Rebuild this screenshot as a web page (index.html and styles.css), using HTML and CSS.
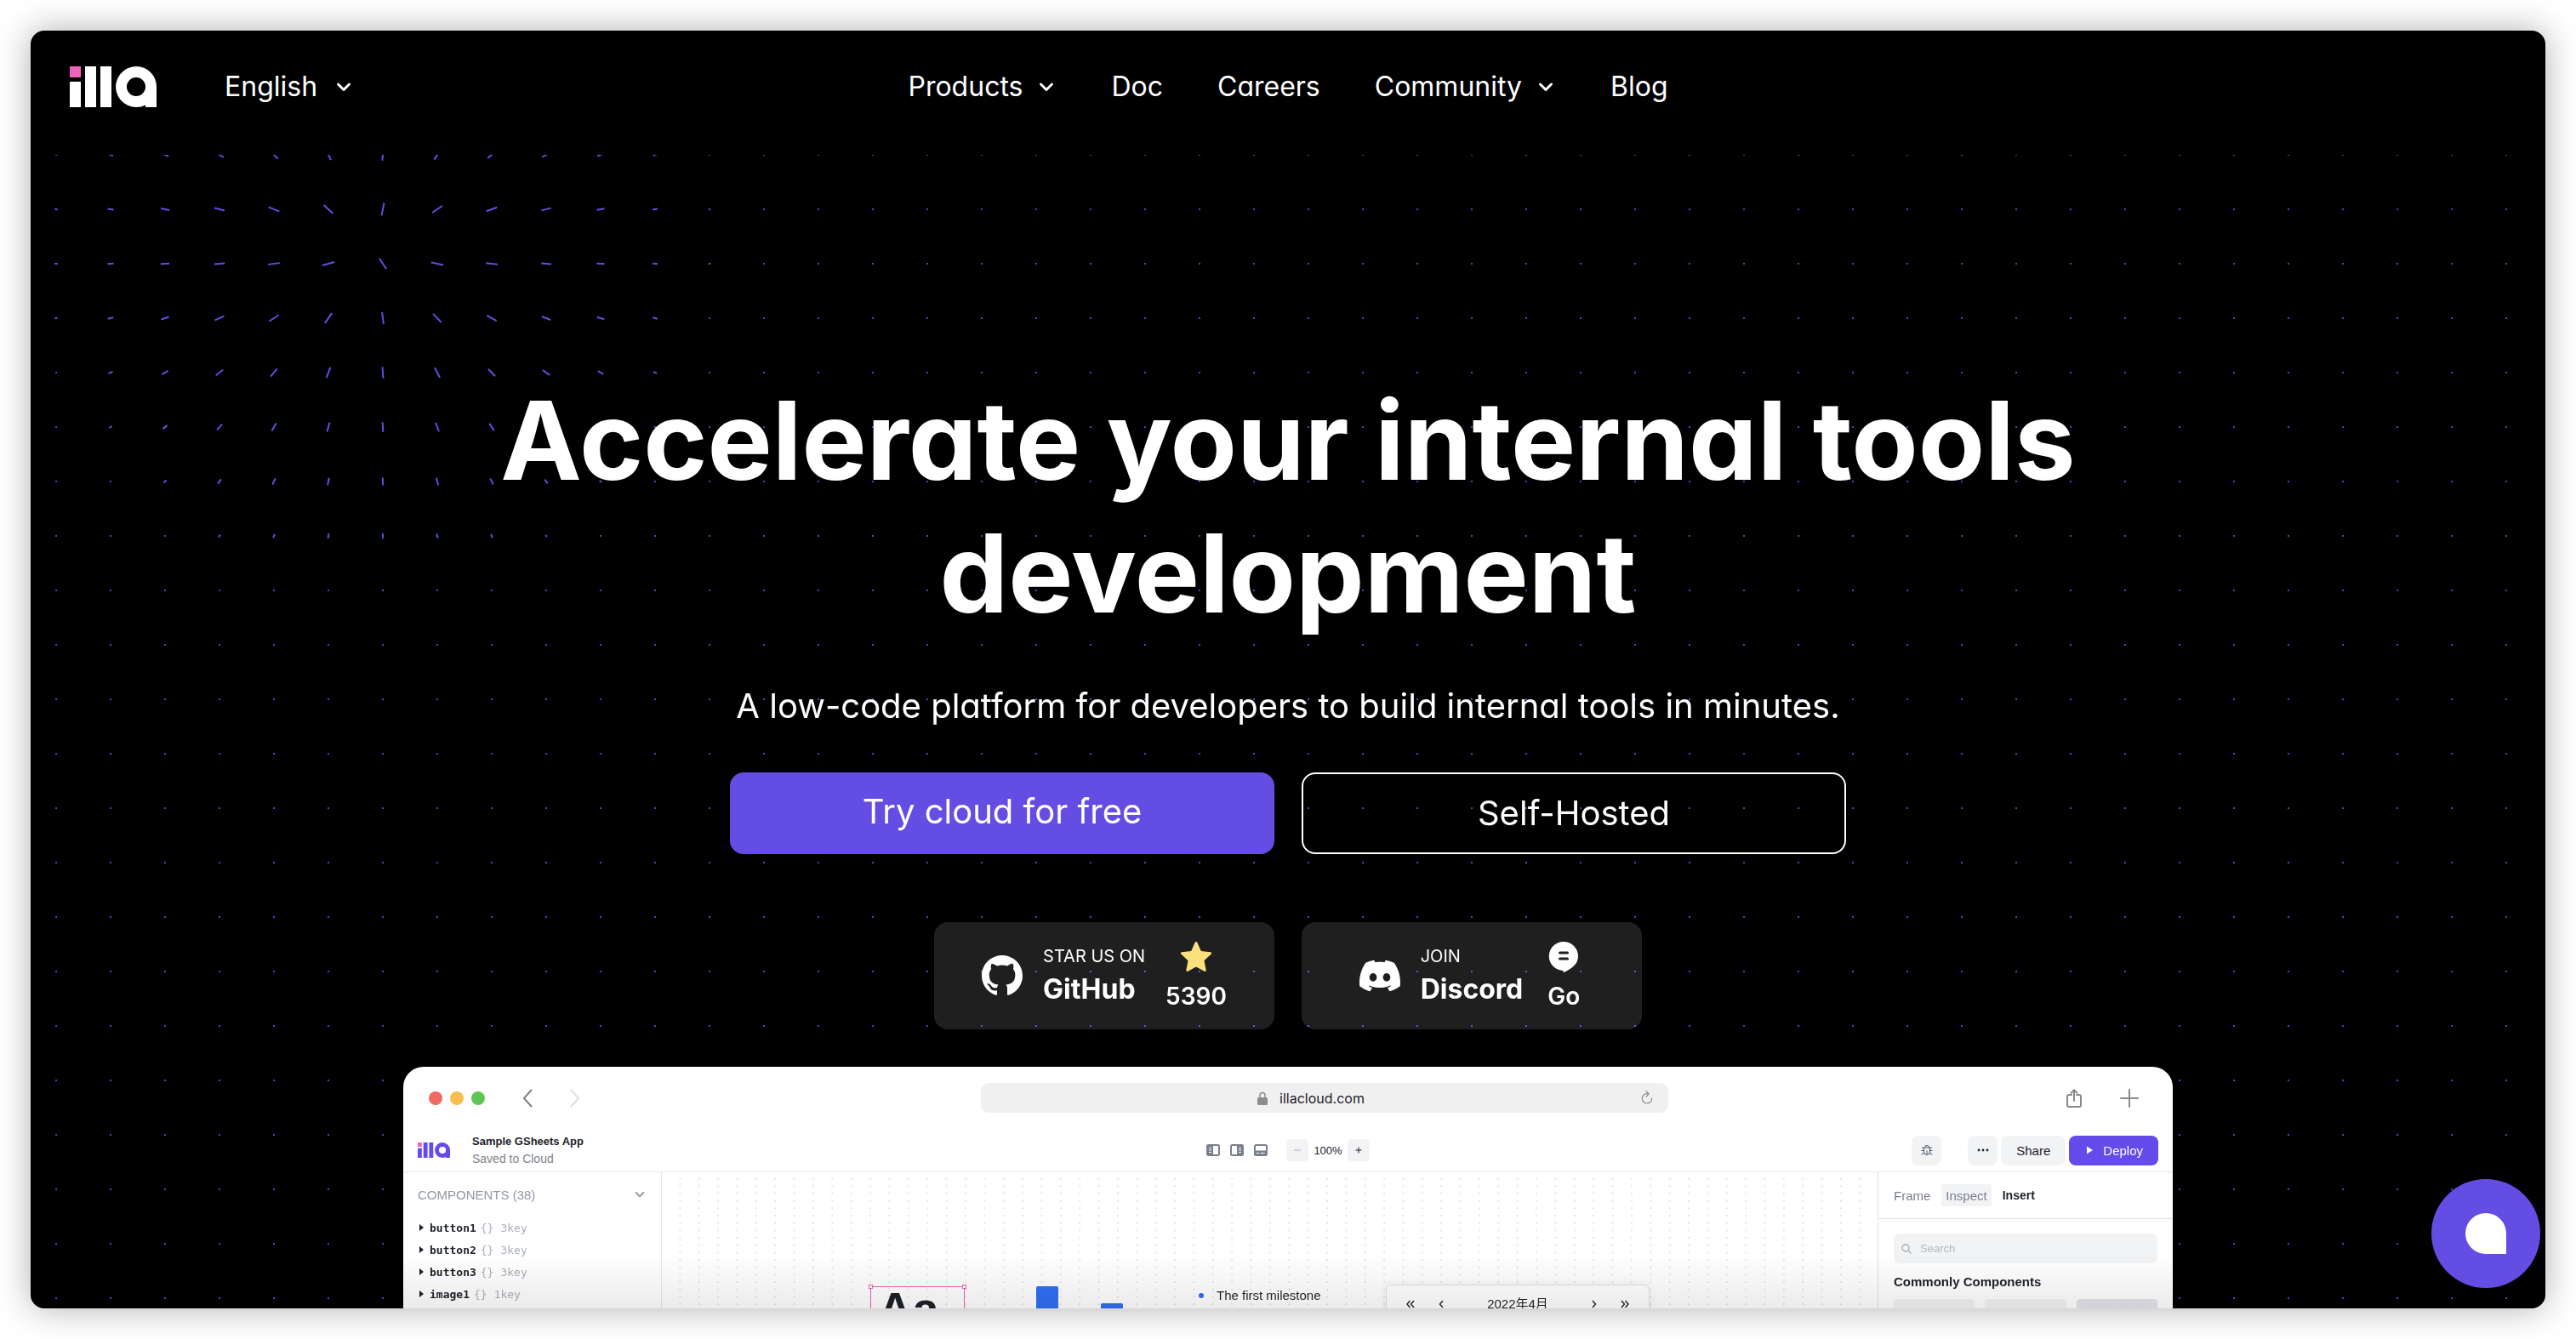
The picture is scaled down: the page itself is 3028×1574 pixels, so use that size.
FILE: index.html
```html
<!DOCTYPE html>
<html lang="en">
<head>
<meta charset="utf-8">
<title>ILLA Cloud</title>
<link rel="stylesheet" href="styles.css">
</head>
<body>
<svg class="sprite" aria-hidden="true">
  <symbol id="illa" viewBox="0 0 102 48">
    <path class="logo-dot" d="M0 0h13v13H0z"/>
    <path d="M0 18h13v30H0zM18 0h13v48H18zM36 0h13v48H36z"/>
    <path fill-rule="evenodd" d="M78 0a24 24 0 0 1 24 24v24H89v-2.600A24 24 0 1 1 78 0zm0 13a11 11 0 1 0 0 22 11 11 0 0 0 0-22z"/>
  </symbol>
  <symbol id="chevron" viewBox="0 0 24 24">
    <path d="M5.500 9l6.500 6.500L18.500 9" fill="none" stroke="currentColor" stroke-width="3" stroke-linecap="round" stroke-linejoin="round"/>
  </symbol>
</svg>

<div class="window">
  <header class="header">
    <div class="header-left">
      <a class="logo" href="#" aria-label="illa home"><svg><use href="#illa"/></svg></a>
      <label class="language">
        <select aria-label="Language"><option>English</option></select>
        <svg class="chevron"><use href="#chevron"/></svg>
      </label>
    </div>
    <nav class="nav">
      <button class="nav-item" type="button">Products<svg class="chevron"><use href="#chevron"/></svg></button>
      <a class="nav-item" href="#">Doc</a>
      <a class="nav-item" href="#">Careers</a>
      <button class="nav-item" type="button">Community<svg class="chevron"><use href="#chevron"/></svg></button>
      <a class="nav-item" href="#">Blog</a>
    </nav>
  </header>

  <main class="hero">
    <canvas class="field" id="field"></canvas>
    <h1 class="title">Accelerate your internal tools development</h1>
    <p class="subtitle">A low-code platform for developers to build internal tools in minutes.</p>
    <div class="actions">
      <a class="cta cta-primary" href="#">Try cloud for free</a>
      <a class="cta cta-outline" href="#">Self-Hosted</a>
    </div>
    <div class="socials">
      <a class="social" href="#">
        <svg class="social-icon" viewBox="0 0 16 16" fill="currentColor"><path d="M8 0C3.580 0 0 3.580 0 8c0 3.540 2.290 6.530 5.470 7.590.4.070.55-.17.55-.38 0-.19-.01-.82-.01-1.490-2.010.37-2.530-.49-2.690-.94-.09-.23-.48-.94-.82-1.130-.28-.15-.68-.52-.01-.53.63-.01 1.080.58 1.230.82.72 1.210 1.870.87 2.330.66.070-.52.28-.87.51-1.070-1.780-.2-3.640-.89-3.640-3.950 0-.87.31-1.590.82-2.150-.08-.2-.36-1.020.080-2.120 0 0 .67-.21 2.200.82.64-.18 1.320-.27 2-.27.68 0 1.360.090 2 .27 1.530-1.040 2.200-.82 2.200-.82.44 1.100.16 1.920.080 2.120.51.56.82 1.270.82 2.150 0 3.070-1.870 3.750-3.650 3.950.29.25.54.73.54 1.480 0 1.070-.01 1.930-.01 2.200 0 .21.15.46.55.38A8.012 8.012 0 0 0 16 8c0-4.420-3.580-8-8-8z"/></svg>
        <span class="social-text"><small>STAR US ON</small><strong>GitHub</strong></span>
        <span class="social-side">
          <svg class="social-icon" viewBox="0 0 48 48"><path d="M22.700 1.800c.5-1.100 2.100-1.100 2.600 0l4.500 10.100 11.100 1.300c1.200.1 1.700 1.600.8 2.400l-8.200 7.600 2.200 11c.2 1.200-1 2.100-2.100 1.500L24 30.400l-9.600 5.300c-1.100.6-2.300-.3-2.100-1.500l2.200-11-8.200-7.600c-.9-.8-.4-2.300.8-2.400l11.100-1.300z" fill="#fae17d"/></svg>
          <b>5390</b>
        </span>
      </a>
      <a class="social" href="#">
        <svg class="social-icon" viewBox="0 0 24 24" fill="currentColor"><path d="M20.317 4.3698a19.7913 19.7913 0 00-4.8851-1.5152.0741.0741 0 00-.0785.0371c-.211.3753-.4447.8648-.6083 1.2495-1.8447-.2762-3.68-.2762-5.4868 0-.1636-.3933-.4058-.8742-.6177-1.2495a.077.077 0 00-.0785-.037 19.7363 19.7363 0 00-4.8852 1.515.0699.0699 0 00-.0321.0277C.5334 9.0458-.319 13.5799.0992 18.0578a.0824.0824 0 00.0312.0561c2.0528 1.5076 4.0413 2.4228 5.9929 3.0294a.0777.0777 0 00.0842-.0276c.4616-.6304.8731-1.2952 1.226-1.9942a.076.076 0 00-.0416-.1057c-.6528-.2476-1.2743-.5495-1.8722-.8923a.077.077 0 01-.0076-.1277c.1258-.0943.2517-.1923.3718-.2914a.0743.0743 0 01.0776-.0105c3.9278 1.7933 8.18 1.7933 12.0614 0a.0739.0739 0 01.0785.0095c.1202.099.246.1981.3728.2924a.077.077 0 01-.0066.1276 12.2986 12.2986 0 01-1.873.8914.0766.0766 0 00-.0407.1067c.3604.698.7719 1.3628 1.225 1.9932a.076.076 0 00.0842.0286c1.961-.6067 3.9495-1.5219 6.0023-3.0294a.077.077 0 00.0313-.0552c.5004-5.177-.8382-9.6739-3.5485-13.6604a.061.061 0 00-.0312-.0286zM8.02 15.3312c-1.1825 0-2.1569-1.0857-2.1569-2.419 0-1.3332.9555-2.4189 2.157-2.4189 1.2108 0 2.1757 1.0952 2.1568 2.419 0 1.3332-.9555 2.4189-2.1569 2.4189zm7.9748 0c-1.1825 0-2.1569-1.0857-2.1569-2.419 0-1.3332.9554-2.4189 2.1569-2.4189 1.2108 0 2.1757 1.0952 2.1568 2.419 0 1.3332-.946 2.4189-2.1568 2.4189Z"/></svg>
        <span class="social-text"><small>JOIN</small><strong>Discord</strong></span>
        <span class="social-side">
          <svg class="social-icon" viewBox="0 0 48 48"><path fill-rule="evenodd" fill="#fff" d="M24 1a17 17 0 0 1 17 17c0 6.500-3.800 10.800-7 13.200-2.800 2.100-5.900 3.800-9 5.500-.9.500-1.500-.1-1.500-1V35A17 17 0 0 1 24 1zm-4.500 11.500a1.500 1.500 0 0 0 0 3h9a1.500 1.500 0 0 0 0-3zm0 7a1.500 1.500 0 0 0 0 3h9a1.500 1.500 0 0 0 0-3z"/></svg>
          <b>Go</b>
        </span>
      </a>
    </div>

    <section class="app" aria-label="Product preview">
      <div class="browser-bar">
        <div class="browser-left">
          <span class="lights"><i class="light red"></i><i class="light yellow"></i><i class="light green"></i></span>
          <svg class="arrow" viewBox="0 0 12 22"><path d="M10.500 1.500L2 11l8.500 9.500"/></svg>
          <svg class="arrow arrow-off" viewBox="0 0 12 22"><path d="M1.500 1.500L10 11l-8.500 9.500"/></svg>
        </div>
        <div class="address">
          <svg class="lock" viewBox="0 0 12 16"><path d="M3 8V4.500a3 3 0 0 1 6 0V8" fill="none" stroke="#8c8c8c" stroke-width="1.500"/><rect y="7" width="12" height="9" rx="1.500" fill="#8c8c8c"/></svg>
          <span>illacloud.com</span>
          <svg class="reload" viewBox="0 0 14 16"><path d="M8.500 3.800A5.700 5.700 0 1 0 12.700 9M6 .8l3.200 3L6.200 7" fill="none" stroke="#8c8c8c" stroke-width="1.200" stroke-linecap="round"/></svg>
        </div>
        <div class="browser-right">
          <svg class="share-icon" viewBox="0 0 18 22"><path d="M6 7H3a2 2 0 0 0-2 2v10a2 2 0 0 0 2 2h12a2 2 0 0 0 2-2V9a2 2 0 0 0-2-2h-3M9 14V1.500M5.500 4.800L9 1.300l3.500 3.500"/></svg>
          <svg class="plus-icon" viewBox="0 0 22 22"><path d="M11 1v20M1 11h20"/></svg>
        </div>
      </div>

      <div class="toolbar">
        <div class="toolbar-left">
          <svg class="app-logo"><use href="#illa"/></svg>
          <div class="doc"><b>Sample GSheets App</b><span>Saved to Cloud</span></div>
        </div>
        <div class="toolbar-mid">
          <svg class="pane" viewBox="0 0 16 14"><rect x="1" y="1" width="14" height="12" rx="1.500"/><path class="solid" d="M1 1h7v12H1z"/><path class="cut" d="M3 4.500h3M3 7h3M3 9.500h3"/></svg>
          <svg class="pane" viewBox="0 0 16 14"><rect x="1" y="1" width="14" height="12" rx="1.500"/><path class="solid" d="M8 1h7v12H8z"/><path class="cut" d="M10 4.500h3M10 7h3M10 9.500h3"/></svg>
          <svg class="pane" viewBox="0 0 16 14"><rect x="1" y="1" width="14" height="12" rx="1.500"/><path class="solid" d="M1 7.500h14V13H1z"/><path class="cut" d="M3 10.500h3M7.500 10.500h5"/></svg>
          <div class="zoom">
            <button class="zoom-btn zoom-off" type="button" aria-label="Zoom out"><svg viewBox="0 0 10 10"><path d="M1 5h8"/></svg></button>
            <span>100%</span>
            <button class="zoom-btn" type="button" aria-label="Zoom in"><svg viewBox="0 0 10 10"><path d="M1.500 5h7M5 1.500v7"/></svg></button>
          </div>
        </div>
        <div class="toolbar-right">
          <button class="tool square debug" type="button" aria-label="Debug"><svg viewBox="0 0 14 14"><path d="M3.500 4h7v5a3.500 3.500 0 0 1-7 0zM4.500 4a2.500 2.500 0 0 1 5 0M7 7.500v5M.5 7.500h3M10.500 7.500h3M1 3.500l2.500 1.700M13 3.500l-2.500 1.700M1.200 12.500v-1l2.500-1M12.800 12.500v-1l-2.500-1"/></svg></button>
          <button class="tool square" type="button" aria-label="More"><svg viewBox="0 0 14 14"><g fill="currentColor" stroke="none"><circle cx="2" cy="7" r="1.400"/><circle cx="7" cy="7" r="1.400"/><circle cx="12" cy="7" r="1.400"/></g></svg></button>
          <button class="tool" type="button">Share</button>
          <button class="tool deploy" type="button"><svg class="play" viewBox="0 0 7 10"><path d="M0 .5v9L7 5z"/></svg>Deploy</button>
        </div>
      </div>

      <div class="workspace">
        <aside class="sidebar">
          <div class="sidebar-head">COMPONENTS (38)<svg class="mini-chevron"><use href="#chevron"/></svg></div>
          <ul class="tree">
            <li><svg class="caret" viewBox="0 0 5 8"><path d="M0 0v8l5-4z"/></svg><b>button1</b><i>{}</i><span>3key</span></li>
            <li><svg class="caret" viewBox="0 0 5 8"><path d="M0 0v8l5-4z"/></svg><b>button2</b><i>{}</i><span>3key</span></li>
            <li><svg class="caret" viewBox="0 0 5 8"><path d="M0 0v8l5-4z"/></svg><b>button3</b><i>{}</i><span>3key</span></li>
            <li><svg class="caret" viewBox="0 0 5 8"><path d="M0 0v8l5-4z"/></svg><b>image1</b><i>{}</i><span>1key</span></li>
          </ul>
        </aside>

        <div class="stage">
          <svg class="stage-dots"><defs><pattern id="dots" width="22.370" height="8.680" patternUnits="userSpaceOnUse"><circle cx="21.400" cy="7.600" r="1"/></pattern></defs><rect width="100%" height="100%" fill="url(#dots)"/></svg>
          <div class="selection"><i class="handle"></i><i class="handle handle-right"></i><span>Aa</span></div>
          <i class="bar bar-tall"></i>
          <i class="bar bar-short"></i>
          <div class="milestone">The first milestone</div>
          <div class="calendar">
            <svg class="double" viewBox="0 0 10 10"><path d="M4.500 1L1 5l3.500 4M9 1L5.500 5 9 9"/></svg>
            <svg class="single" viewBox="0 0 6 10"><path d="M5 1L1.500 5 5 9"/></svg>
            <span>2022年4月</span>
            <svg class="single" viewBox="0 0 6 10"><path d="M1 1l3.500 4L1 9"/></svg>
            <svg class="double" viewBox="0 0 10 10"><path d="M1 1l3.500 4L1 9M5.500 1L9 5 5.500 9"/></svg>
          </div>
        </div>

        <aside class="panel">
          <div class="tabs">
            <button class="tab" type="button">Frame</button>
            <button class="tab tab-hover" type="button">Inspect</button>
            <button class="tab tab-active" type="button">Insert</button>
          </div>
          <div class="panel-body">
            <label class="search">
              <svg viewBox="0 0 12 12"><circle cx="5" cy="5" r="4"/><path d="M8 8l3.500 3.500"/></svg>
              <input type="search" placeholder="Search" aria-label="Search components">
            </label>
            <h2 class="panel-title">Commonly Components</h2>
            <div class="tiles"><i class="tile"></i><i class="tile"></i><i class="tile tile-dark"></i></div>
          </div>
        </aside>
      </div>
    </section>
  </main>

  <button class="chat" type="button" aria-label="Open chat"><span class="chat-drop"></span></button>
</div>
<script src="field.js"></script>
</body>
</html>
```
FILE: styles.css
```css
* {
  box-sizing: border-box;
}

body {
  margin: 0;
  padding: 36px;
  background: #fff;
  color: #fff;
  font-family: Inter, "Liberation Sans", sans-serif;
  font-feature-settings: "cv11";
}

button,
select,
input {
  margin: 0;
  padding: 0;
  border: 0;
  background: none;
  color: inherit;
  font: inherit;
  font-feature-settings: inherit;
}

a {
  color: inherit;
  text-decoration: none;
}

svg {
  display: block;
  flex: none;
}

.sprite {
  position: absolute;
  width: 0;
  height: 0;
}

.window {
  position: relative;
  display: flex;
  flex-direction: column;
  height: calc(100vh - 72px);
  overflow: hidden;
  border-radius: 16px;
  background: #000;
  box-shadow: 0 0 40px rgba(0, 0, 0, 0.32);
}

/* Header */

.header {
  display: grid;
  grid-template-columns: 1fr auto 1fr;
  align-items: center;
  flex: none;
  padding: 42px 46px 56px;
  font-size: 32px;
  line-height: 48px;
}

.header-left {
  display: flex;
  align-items: center;
  gap: 80px;
}

.logo svg {
  width: 102px;
  height: 48px;
  fill: #fff;
}

.logo-dot {
  fill: #ee63bb;
}

.language {
  display: flex;
  align-items: center;
  gap: 18px;
}

.language select {
  appearance: none;
}

.chevron {
  width: 24px;
  height: 24px;
}

.nav {
  display: flex;
  gap: 64px;
}

.nav-item {
  display: flex;
  align-items: center;
  gap: 16px;
}

/* Hero */

.hero {
  position: relative;
  display: flex;
  flex: 1;
  flex-direction: column;
  align-items: center;
  min-height: 0;
  padding-top: 258px;
  overflow: hidden;
}

.field {
  position: absolute;
  inset: 0;
  width: 100%;
  height: 100%;
}

.title,
.subtitle,
.actions,
.socials,
.app {
  position: relative;
  flex: none;
}

.title {
  max-width: 2080px;
  margin: 0;
  font-size: 128px;
  font-weight: 700;
  line-height: 156px;
  text-align: center;
}

.subtitle {
  margin: 54px 0;
  font-size: 40px;
  line-height: 48px;
}

.actions,
.socials {
  display: flex;
  gap: 32px;
}

.cta {
  display: flex;
  align-items: center;
  justify-content: center;
  width: 640px;
  height: 96px;
  padding-bottom: 2px;
  border-radius: 16px;
  font-size: 40px;
}

.cta-primary {
  padding-bottom: 6px;
  background: #634de3;
}

.cta-outline {
  border: 2px solid #fff;
}

.socials {
  margin: 80px 0 44px;
}

.social {
  display: flex;
  align-items: center;
  justify-content: center;
  gap: 24px;
  width: 400px;
  height: 126px;
  border-radius: 16px;
  background: rgba(255, 255, 255, 0.12);
}

.social-icon {
  width: 48px;
  height: 48px;
}

.social-text {
  display: flex;
  flex-direction: column;
  gap: 8px;
}

.social-text small {
  font-size: 20px;
  line-height: 24px;
}

.social-text strong {
  font-size: 32px;
  font-weight: 700;
  line-height: 38px;
}

.social-side {
  display: flex;
  flex-direction: column;
  align-items: center;
}

.social-side b {
  font-size: 28px;
  font-weight: 600;
  line-height: 34px;
}

/* Product preview */

.app {
  display: flex;
  flex: 1;
  flex-direction: column;
  width: 100%;
  max-width: 2080px;
  min-height: 0;
  overflow: hidden;
  border-radius: 24px 24px 0 0;
  background: #fff;
  color: #1d2129;
  font-family: "Liberation Sans", Arial, "Noto Sans CJK SC", sans-serif;
  font-feature-settings: normal;
}

.app::after {
  content: "";
  position: absolute;
  right: 0;
  bottom: 0;
  left: 0;
  height: 64px;
  background: linear-gradient(rgba(0, 0, 0, 0), rgba(0, 0, 0, 0.08));
}

.browser-bar {
  display: grid;
  grid-template-columns: 679fr 808fr 593fr;
  align-items: center;
  flex: none;
  height: 73px;
}

.browser-left {
  display: flex;
  align-items: center;
  gap: 44px;
  padding-left: 30px;
}

.lights {
  display: flex;
  gap: 9px;
}

.light {
  width: 16px;
  height: 16px;
  border-radius: 50%;
}

.red {
  background: #ed6b60;
}

.yellow {
  background: #f5be4f;
}

.green {
  background: #61c555;
}

.arrow {
  width: 12px;
  height: 22px;
  fill: none;
  stroke: #7f7f7f;
  stroke-width: 2;
  stroke-linecap: round;
}

.arrow-off {
  stroke: #dfdfdf;
}

.address {
  position: relative;
  display: flex;
  gap: 14px;
  align-items: center;
  justify-content: center;
  height: 35px;
  padding-right: 32px;
  border-radius: 9px;
  background: #f0f0f0;
  font-family: Inter, "Liberation Sans", sans-serif;
  font-size: 16px;
}

.lock {
  width: 12px;
  height: 16px;
}

.reload {
  position: absolute;
  top: 9px;
  right: 18px;
  width: 14px;
  height: 16px;
}

.browser-right {
  display: flex;
  align-items: center;
  justify-content: flex-end;
  gap: 45px;
  padding-right: 40px;
  fill: none;
  stroke: #8a8a8a;
  stroke-width: 2;
  stroke-linecap: round;
}

.share-icon {
  width: 18px;
  height: 22px;
}

.plus-icon {
  width: 22px;
  height: 22px;
}

.toolbar {
  display: grid;
  grid-template-columns: 1fr auto 1fr;
  align-items: center;
  flex: none;
  height: 51px;
  padding: 0 17px;
  border-bottom: 1px solid #e5e6eb;
}

.toolbar-left {
  display: flex;
  align-items: center;
  gap: 26px;
}

.app-logo {
  width: 38px;
  height: 18px;
  fill: #654aec;
}

.doc {
  display: flex;
  flex-direction: column;
  font-size: 14px;
  line-height: 20px;
}

.doc b {
  font-size: 13px;
}

.doc span {
  color: #7d838c;
}

.toolbar-mid {
  display: flex;
  align-items: center;
  gap: 12px;
  font-size: 13px;
}

.pane {
  width: 16px;
  height: 14px;
  fill: none;
  stroke: #7a808b;
  stroke-width: 2;
}

.pane .solid {
  fill: #7a808b;
  stroke: none;
}

.pane .cut {
  stroke: #fff;
  stroke-width: 1;
}

.zoom {
  display: flex;
  align-items: center;
  gap: 6px;
  padding-left: 10px;
}

.zoom-btn {
  display: grid;
  place-items: center;
  width: 26px;
  height: 26px;
  border-radius: 4px;
  background: #f2f3f5;
}

.zoom-btn svg {
  width: 10px;
  height: 10px;
  fill: none;
  stroke: #1d2129;
  stroke-width: 1;
}

.zoom-off svg {
  stroke: #a9aeb8;
}

.toolbar-right {
  display: flex;
  justify-content: flex-end;
  gap: 4px;
}

.tool {
  height: 35px;
  padding: 0 18px;
  border-radius: 8px;
  background: #f2f3f5;
  font-size: 15px;
}

.tool svg {
  width: 14px;
  height: 14px;
  fill: none;
  stroke: currentColor;
  stroke-width: 1;
}

.square {
  display: grid;
  place-items: center;
  width: 35px;
  padding: 0;
}

.debug {
  margin-right: 27px;
  color: #4e5969;
}

.deploy {
  display: flex;
  align-items: center;
  gap: 12px;
  padding: 0 18px 0 21px;
  background: #654aec;
  color: #fff;
}

.tool .play {
  width: 7px;
  height: 10px;
  fill: #fff;
  stroke: none;
}

.workspace {
  display: grid;
  grid-template-columns: 304px 1fr 347px;
  flex: 1;
  min-height: 0;
}

.sidebar {
  padding: 0 17px;
  border-right: 1px solid #e5e6eb;
}

.sidebar-head {
  display: flex;
  align-items: center;
  justify-content: space-between;
  height: 52px;
  color: #8f97a3;
  font-size: 15px;
}

.mini-chevron {
  width: 16px;
  height: 16px;
}

.tree {
  margin: 0;
  padding: 0;
  list-style: none;
  font-family: "DejaVu Sans Mono", "Liberation Mono", monospace;
  font-size: 13px;
}

.tree li {
  display: flex;
  align-items: center;
  height: 26px;
}

.caret {
  width: 5px;
  height: 8px;
  margin: 0 7px 0 2px;
  fill: #1d2129;
}

.tree i,
.tree span {
  margin-left: 5px;
  color: #a9aeb8;
  font-style: normal;
}

.tree span {
  margin-left: 8px;
}

.stage {
  position: relative;
  overflow: hidden;
}

.stage-dots {
  width: 100%;
  height: 100%;
  fill: #dddfe3;
}

.selection {
  position: absolute;
  top: 134px;
  left: 245px;
  width: 111px;
  padding-left: 8px;
  border: 1px solid #ee63bb;
  font-size: 56px;
  font-weight: 700;
  line-height: 52px;
}

.handle {
  position: absolute;
  top: -3px;
  left: -3px;
  width: 5px;
  height: 5px;
  border: 1px solid #ee63bb;
  background: #fff;
}

.handle-right {
  right: -3px;
  left: auto;
}

.bar {
  position: absolute;
  width: 26px;
  height: 60px;
  border-radius: 2px;
  background: #306ff2;
}

.bar-tall {
  top: 134px;
  left: 440px;
}

.bar-short {
  top: 154px;
  left: 516px;
}

.milestone {
  position: absolute;
  top: 135px;
  left: 631px;
  display: flex;
  align-items: center;
  gap: 15px;
  font-size: 15px;
  line-height: 20px;
}

.milestone::before {
  content: "";
  width: 6px;
  height: 6px;
  border-radius: 50%;
  background: #306ff2;
}

.calendar {
  position: absolute;
  top: 132px;
  left: 851px;
  display: flex;
  align-items: center;
  justify-content: space-between;
  width: 310px;
  padding: 12px 23px;
  border: 1px solid #e0e1e6;
  border-radius: 6px;
  background: #fff;
  box-shadow: 0 0 12px rgba(0, 0, 0, 0.06);
  font-size: 15px;
  line-height: 20px;
}

.calendar svg {
  height: 10px;
  fill: none;
  stroke: #1d2129;
  stroke-width: 1.4;
}

.calendar .double {
  width: 10px;
}

.calendar .single {
  width: 6px;
}

.calendar span {
  margin: 0 24px;
}

.panel {
  border-left: 1px solid #e0e1ea;
}

.tabs {
  display: flex;
  align-items: center;
  gap: 8px;
  height: 55px;
  padding: 0 13px;
  border-bottom: 1px solid #e0e1ea;
  font-size: 15px;
}

.tab {
  height: 26px;
  padding: 0 5px;
  border-radius: 4px;
  color: #7a808b;
}

.tab-hover {
  background: #f2f3f5;
}

.tab-active {
  color: #1d2129;
  font-size: 14px;
  font-weight: 700;
}

.panel-body {
  padding: 17px 18px;
}

.search {
  display: flex;
  align-items: center;
  gap: 10px;
  height: 35px;
  padding: 0 9px;
  border-radius: 8px;
  background: #f2f3f5;
  font-size: 13px;
}

.search svg {
  width: 12px;
  height: 12px;
  fill: none;
  stroke: #a9aeb8;
  stroke-width: 1.4;
}

.search input {
  flex: 1;
  min-width: 0;
}

.search input::placeholder {
  color: #b4b8c0;
}

.panel-title {
  margin: 12px 0 10px;
  font-size: 15px;
  font-weight: 700;
  line-height: 20px;
}

.tiles {
  display: grid;
  grid-template-columns: repeat(3, 1fr);
  gap: 12px;
}

.tile {
  height: 80px;
  border-radius: 4px;
  background: #f2f3f5;
}

.tile-dark {
  background: #e3e3e9;
}

/* Chat launcher */

.chat {
  position: absolute;
  right: 6px;
  bottom: 24px;
  display: grid;
  place-items: center;
  width: 128px;
  height: 128px;
  border-radius: 50%;
  background: #634de3;
}

.chat-drop {
  width: 48px;
  height: 48px;
  border-radius: 50% 50% 0 50%;
  background: #fff;
}
```
FILE: field.js
```js
// Grid of marks that stretch and turn toward a focus point.
const STEP = 64;
const REACH = 400;
const FOCUS = { x: 404, y: 113 };

function drawField() {
  const canvas = document.getElementById('field');
  const width = canvas.clientWidth;
  const height = canvas.clientHeight;
  const ctx = canvas.getContext('2d');
  canvas.width = width;
  canvas.height = height;

  for (let y = 0; y < height; y += STEP) {
    for (let x = 30; x < width; x += STEP) {
      const dx = FOCUS.x - x;
      const dy = FOCUS.y - y;
      const distance = Math.hypot(dx, dy);
      if (distance > REACH) {
        ctx.fillStyle = '#5142c2';
        ctx.fillRect(x - 1, y - 1, 2, 2);
        continue;
      }
      const half = 1 + 6.5 * (1 - (distance / REACH) ** 2);
      const ux = dx / distance * half;
      const uy = dy / distance * half;
      ctx.strokeStyle = '#634de3';
      ctx.lineWidth = 2;
      ctx.beginPath();
      ctx.moveTo(x - ux, y - uy);
      ctx.lineTo(x + ux, y + uy);
      ctx.stroke();
    }
  }
}

drawField();
window.addEventListener('resize', drawField);
```
